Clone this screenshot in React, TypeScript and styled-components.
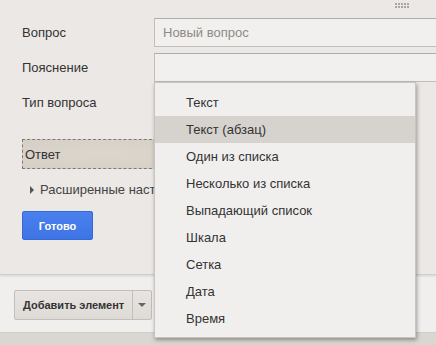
import styled, { createGlobalStyle } from "styled-components";

const GlobalStyle = createGlobalStyle`
  html, body {
    margin: 0;
    padding: 0;
    background: #f1efed;
  }
  body {
    font-family: "Liberation Sans", Arial, sans-serif;
    color: #333;
  }
`;

const questionTypes = [
  "Текст",
  "Текст (абзац)",
  "Один из списка",
  "Несколько из списка",
  "Выпадающий список",
  "Шкала",
  "Сетка",
  "Дата",
  "Время",
];

const fields = [
  { label: "Вопрос", placeholder: "Новый вопрос" },
  { label: "Пояснение", placeholder: "" },
];

export default function App() {
  return (
    <>
      <GlobalStyle />
      <Screen>
        <Panel>
          <Handle>
            {Array.from({ length: 10 }).map((_, i) => (
              <Dot key={i} />
            ))}
          </Handle>
          <Form>
            {fields.map((f) => (
              <Row key={f.label}>
                <Label>{f.label}</Label>
                <Input placeholder={f.placeholder} readOnly />
              </Row>
            ))}
            <Row>
              <Label>Тип вопроса</Label>
              <SelectSpot />
            </Row>
          </Form>
          <AnswerBox>Ответ</AnswerBox>
          <Advanced>
            <Caret />
            Расширенные настройки
          </Advanced>
          <DoneButton>Готово</DoneButton>

          <Menu>
            {questionTypes.map((t, i) => (
              <MenuItem key={t} $active={i === 1}>
                {t}
              </MenuItem>
            ))}
          </Menu>
        </Panel>
        <Footer>
          <SplitButton>
            <AddButton>Добавить элемент</AddButton>
            <ArrowButton>
              <ArrowDown />
            </ArrowButton>
          </SplitButton>
        </Footer>
        <BottomStrip />
      </Screen>
    </>
  );
}

const Screen = styled.div`
  width: 436px;
  height: 345px;
  overflow: hidden;
  display: flex;
  flex-direction: column;
  background: #f1efed;
`;

const Panel = styled.div`
  position: relative;
  height: 275px;
  flex-shrink: 0;
  background: #ebe8e5;
  border-bottom: 1px solid #d2cecb;
  box-shadow: 0 1px 2px rgba(0, 0, 0, 0.12);
  padding: 18px 0 0 22px;
  box-sizing: border-box;
`;

const Handle = styled.div`
  position: absolute;
  top: 3px;
  left: 395px;
  display: grid;
  grid-template-columns: repeat(5, 2px);
  gap: 1px;
`;

const Dot = styled.span`
  width: 2px;
  height: 2px;
  background: #a9a6a3;
`;

const Form = styled.div`
  display: flex;
  flex-direction: column;
  gap: 7px;
`;

const Row = styled.div`
  display: grid;
  grid-template-columns: 132px 1fr;
  align-items: center;
  height: 28px;
`;

const Label = styled.span`
  font-size: 13px;
  color: #333;
`;

const Input = styled.input`
  box-sizing: border-box;
  height: 29px;
  width: 300px;
  border: 1px solid #c1bdb9;
  border-top-color: #b0aca8;
  background: #f2f0ee;
  padding: 0 8px;
  font-family: "Liberation Sans", Arial, sans-serif;
  font-size: 13px;
  color: #333;
  outline: none;
  &::placeholder {
    color: #8d8a87;
  }
`;

const SelectSpot = styled.div`
  height: 28px;
`;

const AnswerBox = styled.div`
  margin-top: 23px;
  width: 140px;
  height: 30px;
  box-sizing: border-box;
  border: 1px dashed #7d7a76;
  background: radial-gradient(ellipse at 60% 50%, #dcd6cd 0%, #d5cfc5 100%);
  display: flex;
  align-items: center;
  padding-left: 2px;
  font-size: 13px;
  color: #333;
`;

const Advanced = styled.div`
  margin-top: 13px;
  margin-left: 8px;
  display: flex;
  align-items: center;
  gap: 6px;
  font-size: 13px;
  color: #444;
  white-space: nowrap;
`;

const Caret = styled.span`
  width: 0;
  height: 0;
  border-top: 4px solid transparent;
  border-bottom: 4px solid transparent;
  border-left: 4px solid #555;
`;

const DoneButton = styled.button`
  margin-top: 14px;
  width: 71px;
  height: 29px;
  border: 1px solid #3569d6;
  border-radius: 2px;
  background: linear-gradient(#4a80ee, #3f74e4);
  color: #fff;
  font-family: "Liberation Sans", Arial, sans-serif;
  font-weight: bold;
  font-size: 11px;
  padding: 0;
`;

const Menu = styled.ul`
  position: absolute;
  top: 82px;
  left: 154px;
  width: 262px;
  height: 256px;
  margin: 0;
  padding: 6px 0 0;
  box-sizing: border-box;
  list-style: none;
  background: #f1efed;
  border: 1px solid #c8c4c0;
  box-shadow: 1px 2px 4px rgba(0, 0, 0, 0.35);
  z-index: 2;
`;

const MenuItem = styled.li<{ $active?: boolean }>`
  height: 27px;
  line-height: 27px;
  padding-left: 31px;
  font-size: 13px;
  color: #333;
  background: ${(p) => (p.$active ? "#d6d2cd" : "transparent")};
`;

const Footer = styled.div`
  flex: 1;
  display: flex;
  align-items: center;
  padding: 2px 0 0 14px;
  background: #f1efed;
`;

const SplitButton = styled.div`
  display: flex;
  height: 28px;
  border: 1px solid #c2beba;
  border-radius: 2px;
  background: linear-gradient(#e7e4e1, #dedbd7);
`;

const AddButton = styled.button`
  border: none;
  background: transparent;
  padding: 0 8px;
  font-family: "Liberation Sans", Arial, sans-serif;
  font-weight: bold;
  font-size: 11px;
  color: #333;
  border-right: 1px solid #c2beba;
`;

const ArrowButton = styled.button`
  width: 18px;
  border: none;
  background: transparent;
  display: flex;
  align-items: center;
  justify-content: center;
  padding: 0;
`;

const ArrowDown = styled.span`
  width: 0;
  height: 0;
  border-left: 4px solid transparent;
  border-right: 4px solid transparent;
  border-top: 4px solid #666;
`;

const BottomStrip = styled.div`
  height: 12px;
  flex-shrink: 0;
  background: #dad7d3;
  border-top: 1px solid #d0ccc8;
`;
